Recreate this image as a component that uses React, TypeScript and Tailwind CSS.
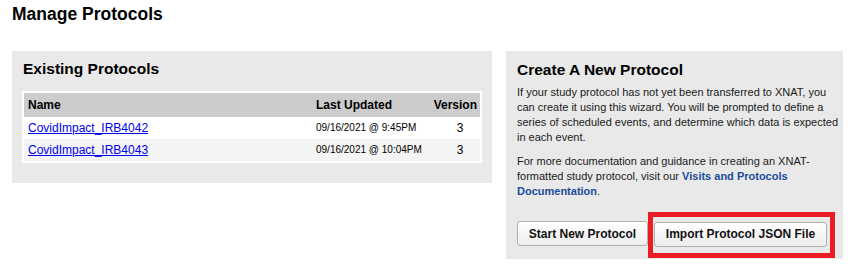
import React from "react";

const protocols = [
  { name: "CovidImpact_IRB4042", updated: "09/16/2021 @ 9:45PM", version: 3 },
  { name: "CovidImpact_IRB4043", updated: "09/16/2021 @ 10:04PM", version: 3 },
];

export default function App() {
  return (
    <div className="w-[860px] h-[276px] bg-white text-black font-['Liberation_Sans',Arial,sans-serif]">
      <h1 className="pl-3 pt-[3px] text-[17.5px] leading-[22px] font-bold">Manage Protocols</h1>

      <div className="mt-[26px] flex items-start pl-3 gap-[14px]">
        {/* Existing protocols */}
        <div className="w-[480px] h-[132px] bg-[#e9e9e9] px-[10px] pt-[8px]">
          <h2 className="pl-[1px] text-[15.5px] leading-[20px] font-bold">Existing Protocols</h2>
          <div className="mt-[12px] bg-white p-[2px]">
            <table className="w-full border-collapse text-[12px]">
              <thead>
                <tr className="bg-[#cccccc] h-[24px] text-left font-bold">
                  <th className="pl-[4px] font-bold">Name</th>
                  <th className="w-[116px] font-bold">Last Updated</th>
                  <th className="w-[48px] pr-[3px] text-right font-bold">Version</th>
                </tr>
              </thead>
              <tbody>
                {protocols.map((p, idx) => (
                  <tr key={p.name} className={`h-[22px] ${idx % 2 ? "bg-[#f4f4f4]" : "bg-white"}`}>
                    <td className="pl-[4px]">
                      <a href="#" className="text-[#0000ee] underline">{p.name}</a>
                    </td>
                    <td className="text-[10px] align-top pt-[3px]">{p.updated}</td>
                    <td className="text-center pl-[8px]">{p.version}</td>
                  </tr>
                ))}
              </tbody>
            </table>
          </div>
        </div>

        {/* Create new */}
        <div className="w-[337px] h-[208px] bg-[#e9e9e9] pl-[11px] pr-[3px] pt-[9px]">
          <h2 className="text-[15.5px] leading-[20px] font-bold">Create A New Protocol</h2>
          <p className="mt-[5px] text-[11px] leading-[15px] text-[#1a1a1a]">
            If your study protocol has not yet been transferred to XNAT, you can create it using this wizard. You
            will be prompted to define a series of scheduled events, and determine which data is expected in each
            event.
          </p>
          <p className="mt-[9px] text-[11px] leading-[15px] text-[#1a1a1a]">
            For more documentation and guidance in creating an XNAT-formatted study protocol, visit our{" "}
            <a href="#" className="font-bold text-[#1b4c9c]">Visits and Protocols Documentation</a>.
          </p>
          <div className="mt-[22px] flex items-center">
            <button className="h-[25px] w-[131px] rounded-[3px] border border-[#b0b0b0] bg-gradient-to-b from-white to-[#ededed] text-[12px] font-bold text-[#111]">
              Start New Protocol
            </button>
            <div className="relative ml-[6px]">
              <button className="h-[25px] w-[173px] rounded-[3px] border border-[#b0b0b0] bg-gradient-to-b from-white to-[#ededed] text-[12px] font-bold text-[#111]">
                Import Protocol JSON File
              </button>
              <div className="absolute left-[-6px] top-[-9px] w-[187px] h-[46px] border-[5px] border-[#ec1c24] pointer-events-none" />
            </div>
          </div>
        </div>
      </div>
    </div>
  );
}
